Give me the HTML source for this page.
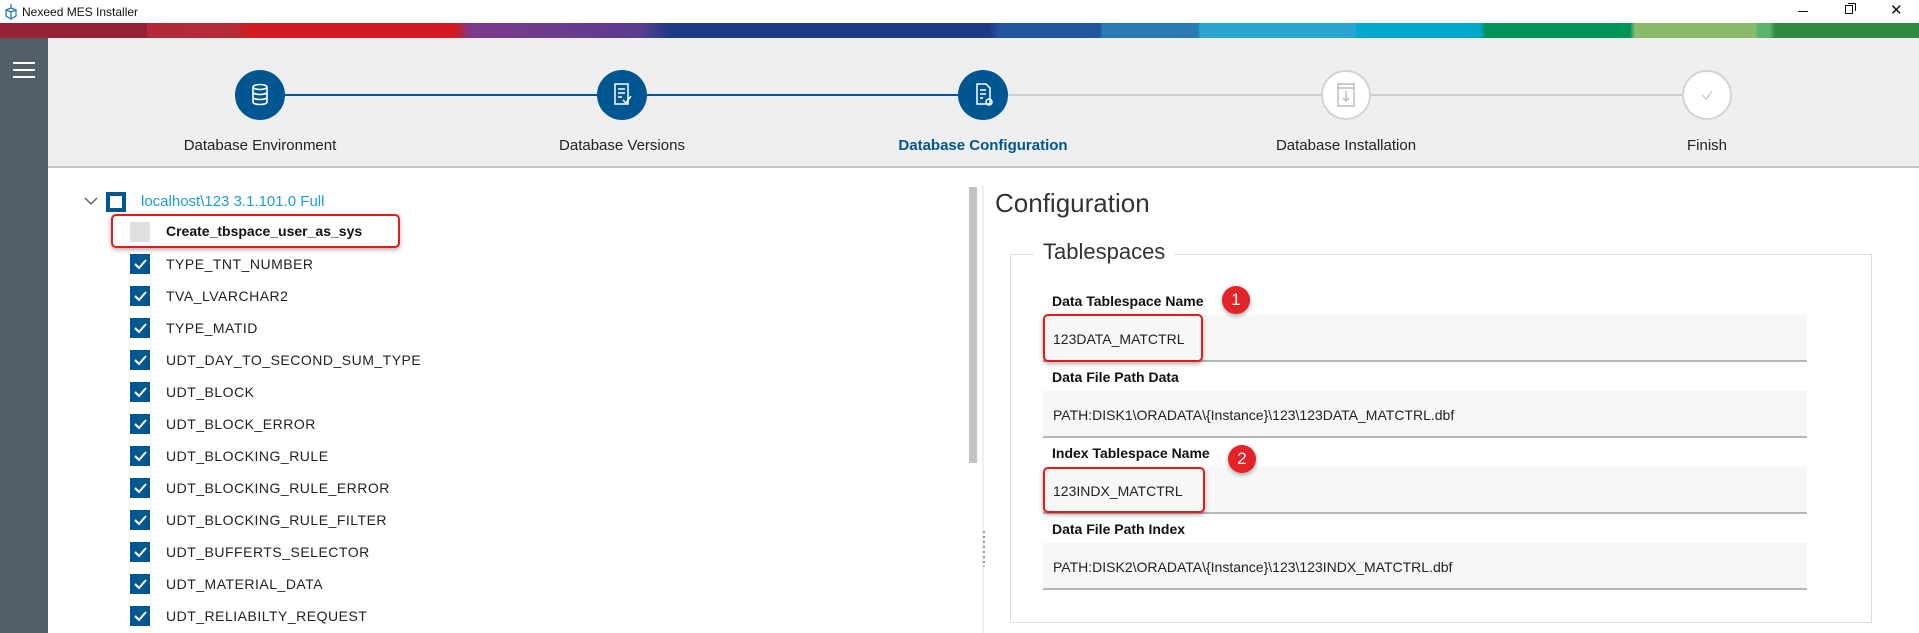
<!DOCTYPE html>
<html><head><meta charset="utf-8"><style>
*{margin:0;padding:0;box-sizing:border-box}
body{width:1919px;height:633px;overflow:hidden;background:#fff;font-family:"Liberation Sans",sans-serif;position:relative;color:#222}
.a{position:absolute}
.band{top:23px;left:0;width:1919px;height:15px;background:linear-gradient(90deg,#952335 0,#952335 147px,#b12a3b 147px,#b52a36 235px,#d51920 250px,#d51920 455px,#7d3a8c 470px,#5a3d8e 640px,#1e3a87 670px,#1e3a87 990px,#2356a0 1000px,#2356a0 1100px,#2a7ab5 1102px,#2a7ab5 1198px,#28a5d0 1200px,#28a5d0 1355px,#00a8d0 1357px,#00a8d0 1480px,#00965a 1485px,#00965a 1630px,#8aba6a 1635px,#8aba6a 1755px,#5bb46b 1758px,#5bb46b 1770px,#2e8b3f 1775px)}
.side{left:0;top:38px;width:48px;height:595px;background:#535d67}
.hdr{left:48px;top:38px;width:1871px;height:130px;background:#efefef;border-bottom:2px solid #c4c4c4}
.circ{width:50px;height:50px;border-radius:50%;top:70px}
.on{background:#005691}
.off{background:#fff;border:2px solid #d4d4d4}
.lbl{top:137px;font-size:15px;width:240px;text-align:center;color:#222}
.row{left:130px;height:20px;font-size:14px;letter-spacing:.5px;color:#222}
.cb{position:absolute;left:0;top:0;width:20px;height:20px;background:#005691}
.row span{position:absolute;left:36px;top:2px;white-space:nowrap}
.fl{left:1052px;font-size:14px;font-weight:bold;color:#111}
.inp{left:1043px;width:764px;height:47px;background:#f7f7f7;border-bottom:2px solid #b4b8bc;font-size:14px;padding:16px 0 0 10px;color:#222}
.red{border:2px solid #e21b1b;border-radius:5px;box-shadow:0 2px 5px rgba(0,0,0,.3)}
.badge{width:28px;height:28px;border-radius:50%;background:#e42228;color:#fff;font-size:17px;text-align:center;line-height:28px;box-shadow:0 2px 4px rgba(0,0,0,.35);z-index:5}
</style></head><body>
<svg class="a" style="left:3px;top:3px" width="16" height="17" viewBox="0 0 16 17"><path d="M8 1v4M3 7l5-2 5 2v6l-5 3-5-3z M3 7l5 2 5-2M8 9v7" fill="none" stroke="#2a7ab5" stroke-width="1.3"/></svg>
<div class="a" style="left:22px;top:5px;font-size:12px;color:#111">Nexeed MES Installer</div>
<div class="a" style="left:1798px;top:11px;width:10px;height:1px;background:#111"></div>
<div class="a" style="left:1845px;top:5px;width:8px;height:9px;border:1px solid #111"></div>
<div class="a" style="left:1848px;top:3px;width:8px;height:8px;border-top:1px solid #111;border-right:1px solid #111"></div>
<div class="a" style="left:1890px;top:1px;font-size:15px;color:#111">✕</div>
<div class="a band"></div>
<div class="a side"></div>
<div class="a" style="left:13px;top:62px;width:22px;height:2px;background:#fff;box-shadow:0 7px 0 #fff,0 14px 0 #fff"></div>
<div class="a hdr"></div>
<div class="a" style="left:285px;top:94px;width:697px;height:2px;background:#005691"></div>
<div class="a" style="left:1008px;top:94px;width:700px;height:2px;background:#cfcfcf"></div>
<div class="a circ on" style="left:235px"><svg width="50" height="50"><g fill="none" stroke="#fff" stroke-width="1.6"><ellipse cx="25" cy="17" rx="7" ry="2.5"/><path d="M18 17v15c0 1.5 3 2.5 7 2.5s7-1 7-2.5V17M18 22c0 1.5 3 2.5 7 2.5s7-1 7-2.5M18 27c0 1.5 3 2.5 7 2.5s7-1 7-2.5"/></g></svg></div>
<div class="a circ on" style="left:597px"><svg width="50" height="50"><g fill="none" stroke="#fff" stroke-width="1.5"><path d="M18 14h13v20H18z M21 19h7M21 23h7M21 27h4M26 30l3 3 5-7"/></g></svg></div>
<div class="a circ on" style="left:958px"><svg width="50" height="50"><g fill="none" stroke="#fff" stroke-width="1.5"><path d="M19 14h9l4 4v16H19z M22 20h6M22 24h6M22 28h3"/><circle cx="31" cy="32" r="3"/></g></svg></div>
<div class="a circ off" style="left:1321px"><svg width="46" height="46"><g fill="none" stroke="#bbb" stroke-width="1.4"><path d="M15 12h16v22H15z M15 16h16 M23 19v10M20 26l3 3 3-3"/></g></svg></div>
<div class="a circ off" style="left:1682px"><svg width="46" height="46"><path d="M18 23l4 4 6-8" fill="none" stroke="#ccc" stroke-width="1.4"/></svg></div>
<div class="a lbl" style="left:140px">Database Environment</div>
<div class="a lbl" style="left:502px">Database Versions</div>
<div class="a lbl" style="left:863px;color:#005691;font-weight:bold">Database Configuration</div>
<div class="a lbl" style="left:1226px">Database Installation</div>
<div class="a lbl" style="left:1587px">Finish</div>

<svg class="a" style="left:84px;top:196px" width="14" height="10"><path d="M1 2l6 6 6-6" fill="none" stroke="#555" stroke-width="1.3"/></svg>
<div class="a" style="left:106px;top:192px;width:20px;height:20px;border:4px solid #005691;background:#fff"></div>
<div class="a" style="left:141px;top:193px;font-size:15px;color:#1a9fd9">localhost\123 3.1.101.0 Full</div>
<div class="a red" style="left:111px;top:214px;width:289px;height:34px"></div>
<div class="a" style="left:130px;top:222px;width:20px;height:20px;background:#e0e0e0"></div>
<div class="a" style="left:166px;top:223px;font-size:14px;font-weight:bold;color:#111">Create_tbspace_user_as_sys</div>

<div class="a row" style="top:254px"><div class="cb"></div><svg class="a" width="20" height="20"><path d="M5 10l4 4 7-8" fill="none" stroke="#fff" stroke-width="2"/></svg><span>TYPE_TNT_NUMBER</span></div>
<div class="a row" style="top:286px"><div class="cb"></div><svg class="a" width="20" height="20"><path d="M5 10l4 4 7-8" fill="none" stroke="#fff" stroke-width="2"/></svg><span>TVA_LVARCHAR2</span></div>
<div class="a row" style="top:318px"><div class="cb"></div><svg class="a" width="20" height="20"><path d="M5 10l4 4 7-8" fill="none" stroke="#fff" stroke-width="2"/></svg><span>TYPE_MATID</span></div>
<div class="a row" style="top:350px"><div class="cb"></div><svg class="a" width="20" height="20"><path d="M5 10l4 4 7-8" fill="none" stroke="#fff" stroke-width="2"/></svg><span>UDT_DAY_TO_SECOND_SUM_TYPE</span></div>
<div class="a row" style="top:382px"><div class="cb"></div><svg class="a" width="20" height="20"><path d="M5 10l4 4 7-8" fill="none" stroke="#fff" stroke-width="2"/></svg><span>UDT_BLOCK</span></div>
<div class="a row" style="top:414px"><div class="cb"></div><svg class="a" width="20" height="20"><path d="M5 10l4 4 7-8" fill="none" stroke="#fff" stroke-width="2"/></svg><span>UDT_BLOCK_ERROR</span></div>
<div class="a row" style="top:446px"><div class="cb"></div><svg class="a" width="20" height="20"><path d="M5 10l4 4 7-8" fill="none" stroke="#fff" stroke-width="2"/></svg><span>UDT_BLOCKING_RULE</span></div>
<div class="a row" style="top:478px"><div class="cb"></div><svg class="a" width="20" height="20"><path d="M5 10l4 4 7-8" fill="none" stroke="#fff" stroke-width="2"/></svg><span>UDT_BLOCKING_RULE_ERROR</span></div>
<div class="a row" style="top:510px"><div class="cb"></div><svg class="a" width="20" height="20"><path d="M5 10l4 4 7-8" fill="none" stroke="#fff" stroke-width="2"/></svg><span>UDT_BLOCKING_RULE_FILTER</span></div>
<div class="a row" style="top:542px"><div class="cb"></div><svg class="a" width="20" height="20"><path d="M5 10l4 4 7-8" fill="none" stroke="#fff" stroke-width="2"/></svg><span>UDT_BUFFERTS_SELECTOR</span></div>
<div class="a row" style="top:574px"><div class="cb"></div><svg class="a" width="20" height="20"><path d="M5 10l4 4 7-8" fill="none" stroke="#fff" stroke-width="2"/></svg><span>UDT_MATERIAL_DATA</span></div>
<div class="a row" style="top:606px"><div class="cb"></div><svg class="a" width="20" height="20"><path d="M5 10l4 4 7-8" fill="none" stroke="#fff" stroke-width="2"/></svg><span>UDT_RELIABILTY_REQUEST</span></div>

<div class="a" style="left:969px;top:187px;width:8px;height:276px;background:#c2c2c2"></div>
<div class="a" style="left:982px;top:186px;width:2px;height:447px;background:#f0f0f0"></div>
<div class="a" style="left:983px;top:531px;width:2px;height:36px;background:repeating-linear-gradient(#999 0 2px,transparent 2px 5px)"></div>

<div class="a" style="left:995px;top:188px;font-size:26px;color:#333">Configuration</div>
<div class="a" style="left:1010px;top:254px;width:862px;height:369px;border:1px solid #ddd"></div>
<div class="a" style="left:1034px;top:239px;padding:0 9px;background:#fff;font-size:22px;color:#333">Tablespaces</div>

<div class="a fl" style="top:293px">Data Tablespace Name</div>
<div class="a inp" style="top:315px">123DATA_MATCTRL</div>
<div class="a red" style="left:1043px;top:314px;width:160px;height:48px"></div>
<div class="a fl" style="top:369px">Data File Path Data</div>
<div class="a inp" style="top:391px">PATH:DISK1\ORADATA\{Instance}\123\123DATA_MATCTRL.dbf</div>
<div class="a fl" style="top:445px">Index Tablespace Name</div>
<div class="a inp" style="top:467px">123INDX_MATCTRL</div>
<div class="a red" style="left:1043px;top:467px;width:162px;height:46px"></div>
<div class="a fl" style="top:521px">Data File Path Index</div>
<div class="a inp" style="top:543px">PATH:DISK2\ORADATA\{Instance}\123\123INDX_MATCTRL.dbf</div>
<div class="a badge" style="left:1222px;top:286px">1</div>
<div class="a badge" style="left:1228px;top:445px">2</div>
</body></html>
